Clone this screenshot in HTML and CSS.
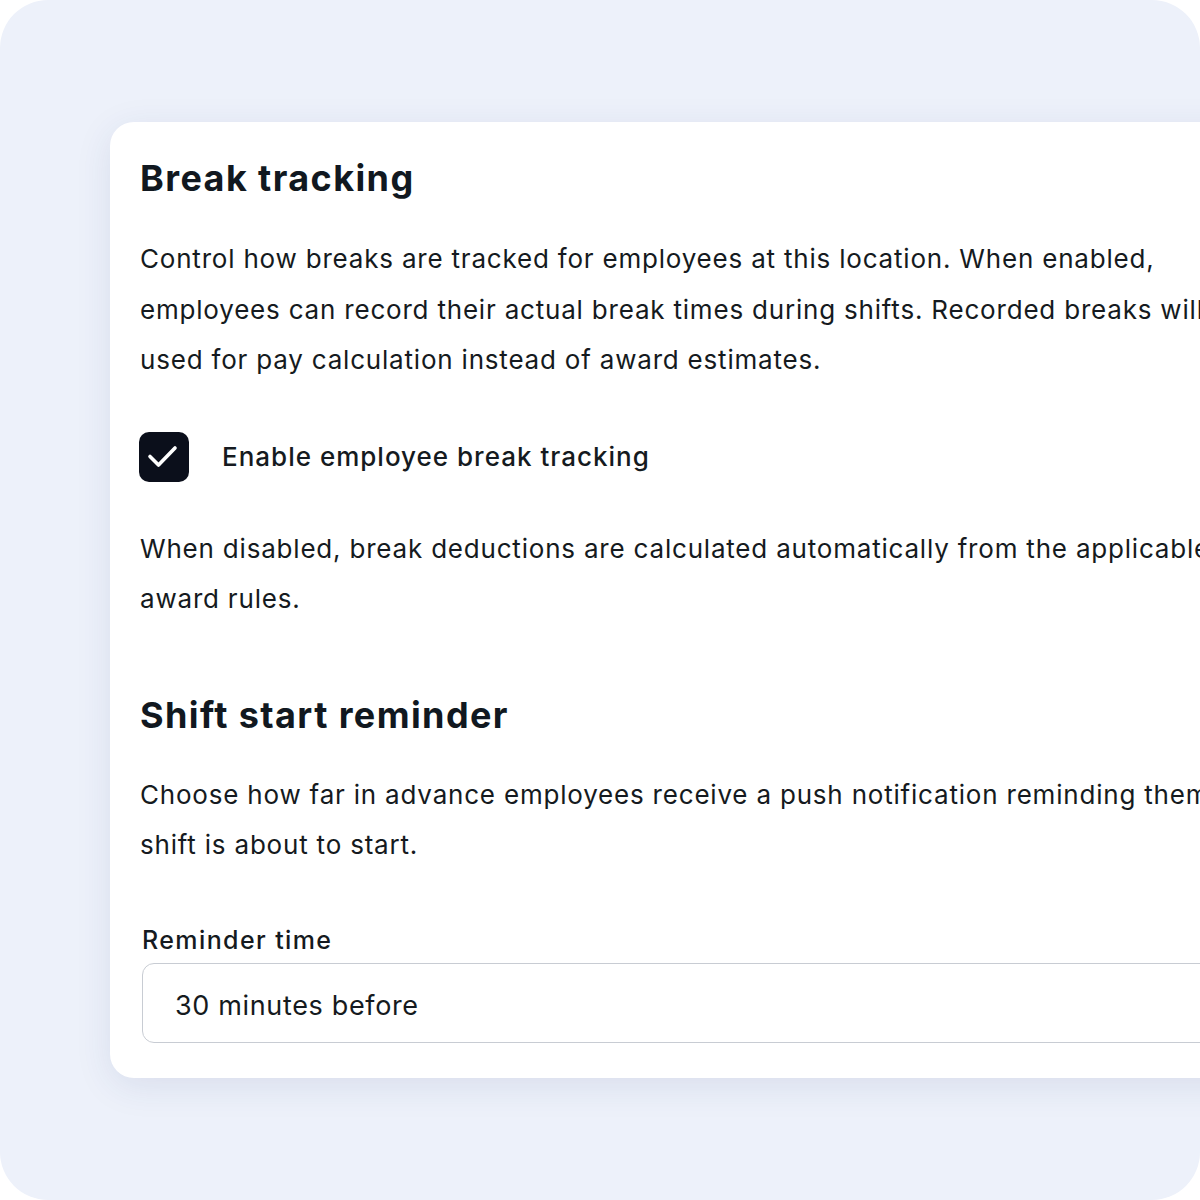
FILE: index.html
```html
<!DOCTYPE html>
<html>
<head>
<meta charset="utf-8">
<link rel="stylesheet" href="styles.css">
</head>
<body>
<div class="frame">
  <div class="card">
    <section class="section">
      <h2 class="title">Break tracking</h2>
      <p class="text">Control how breaks are tracked for employees at this location. When enabled, employees can record their actual break times during shifts. Recorded breaks will be used for pay calculation instead of award estimates.</p>
      <label class="check-row">
        <span class="checkbox">
          <svg width="50" height="50" viewBox="0 0 50 50" fill="none" stroke="#fff" stroke-width="3.6" stroke-linecap="round" stroke-linejoin="round"><path d="M11 24.5l8.5 8.5L36 16"/></svg>
        </span>
        <span class="check-label">Enable employee break tracking</span>
      </label>
      <p class="text">When disabled, break deductions are calculated automatically from the applicable award rules.</p>
    </section>
    <section class="section second">
      <h2 class="title">Shift start reminder</h2>
      <p class="text">Choose how far in advance employees receive a push notification reminding them their shift is about to start.</p>
      <div class="field">
        <div class="field-label">Reminder time</div>
        <div class="select">30 minutes before</div>
      </div>
    </section>
  </div>
</div>
</body>
</html>
```
FILE: styles.css
```css
html, body {
  margin: 0;
  padding: 0;
  background: #ffffff;
}
body {
  font-family: Inter, "Noto Sans", sans-serif;
  color: #151a20;
}
.frame {
  width: 1200px;
  height: 1200px;
  background: #edf1fa;
  border-radius: 48px;
  overflow: hidden;
  padding: 122px 0 0 110px;
  box-sizing: border-box;
}
.card {
  width: 1200px;
  height: 956px;
  background: #ffffff;
  border-radius: 24px;
  box-shadow: 0 8px 36px rgba(40, 60, 120, 0.10);
  padding: 32px 30px 0 30px;
  box-sizing: border-box;
}
.title {
  margin: 0;
  font-size: 36px;
  font-weight: 700;
  letter-spacing: 1.4px;
  line-height: 48px;
  color: #111820;
}
.text {
  margin: 0;
  font-size: 26px;
  line-height: 50.5px;
  font-weight: 400;
  letter-spacing: 0.8px;
}
.section > .title + .text {
  margin-top: 32px;
}
.second > .title + .text {
  margin-top: 31px;
}
.check-row {
  display: flex;
  align-items: center;
  gap: 33px;
  margin: 46px 0 42px -1px;
}
.checkbox {
  width: 50px;
  height: 50px;
  flex: none;
  border-radius: 10px;
  background: #0b0f1b;
}
.checkbox svg {
  display: block;
}
.check-label {
  font-size: 26px;
  line-height: 31px;
  font-weight: 500;
  letter-spacing: 1px;
}
.second {
  margin-top: 66px;
}
.field {
  margin-top: 53px;
  padding-left: 2px;
}
.field-label {
  font-size: 25px;
  font-weight: 500;
  letter-spacing: 1.4px;
  line-height: 32px;
  margin-bottom: 7px;
}
.select {
  height: 80px;
  box-sizing: border-box;
  border: 1.5px solid #c8ccd3;
  border-radius: 12px;
  padding: 6px 32px 0 32px;
  display: flex;
  align-items: center;
  font-size: 27px;
  letter-spacing: 0.65px;
}
```
